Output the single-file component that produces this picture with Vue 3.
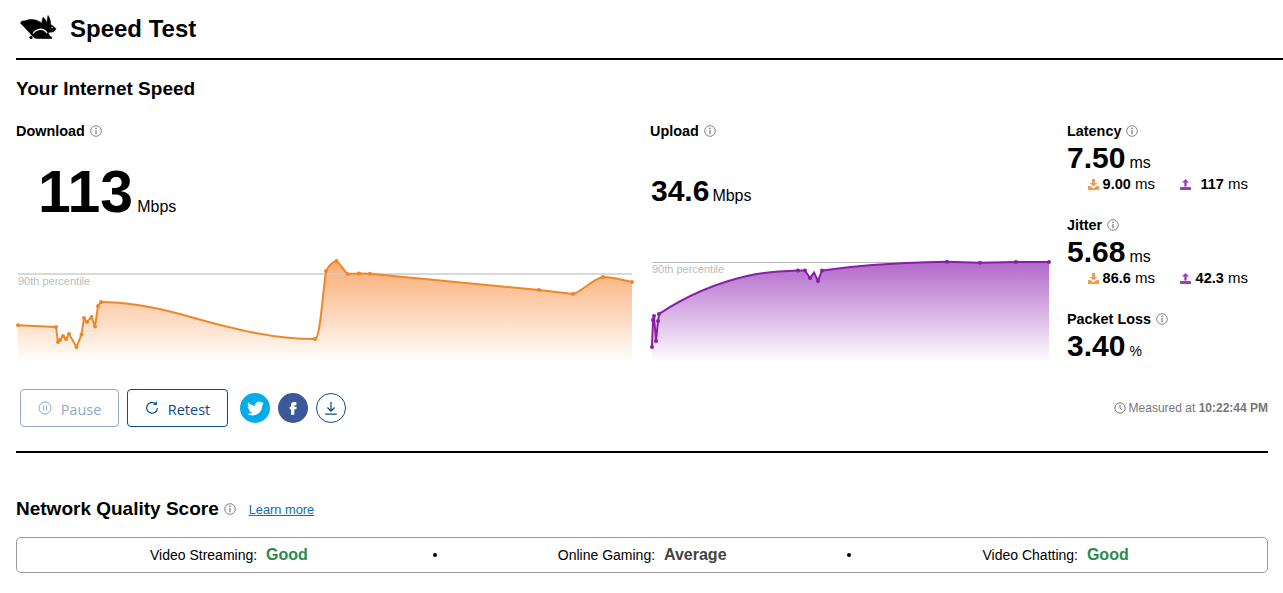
<script setup>
const dlLine = 'M18 325.3 L56 327 L58 342 L60 340 L63 336 L66 339 L69 334 L76.5 347 L81.5 334.5 L84 318 L87 322 L91.5 317 L95 326.5 L98 306 L101 302 C125 302 150 306 180 314 C225 327 270 339 315 339 C320 339 322 300 326 271 C328 267 332 262 336.5 261 C340 263 344 271 347.5 274 L359 273.5 L370 273.7 L539 290 L573 294 C582 292 592 279 603 277 C612 277 622 280 632 282'
const dlFill = dlLine + ' L632 360 L18 360 Z'
const dlDots = [[18, 325.3], [56, 327], [58, 342], [60, 340], [63, 336], [66, 339], [69, 334], [76.5, 347], [81.5, 334.5], [84, 318], [87, 322], [91.5, 317], [95, 326.5], [98, 306], [101, 302], [315, 339], [326, 271], [336.5, 261], [347.5, 274], [359, 273.5], [370, 273.7], [539, 290], [573, 294], [603, 277], [632, 282]]

const ulLine = 'M652 347 L653 320 L654 316 L656 341 L658 321 L659 314 C680 300 712 284 747 276 C765 272 782 271 798 270.5 L805 270.5 L810 278 L814 272.5 L818 281 L822 270.5 C850 267 880 263 947 261.7 L980 262.7 L1016 262 L1049 262'
const ulFill = ulLine + ' L1049 360 L652 360 Z'
const ulDots = [[652, 347], [653, 320], [654, 316], [656, 341], [658, 321], [659, 314], [798, 270.5], [805, 270.5], [810, 278], [818, 281], [822, 270.5], [947, 261.7], [980, 262.7], [1016, 262], [1049, 262]]

const scores = [
  { label: 'Video Streaming:', value: 'Good', cls: 'good' },
  { label: 'Online Gaming:', value: 'Average', cls: 'avg' },
  { label: 'Video Chatting:', value: 'Good', cls: 'good' }
]
</script>

<template>
  <div class="page">
    <svg class="defs" width="0" height="0">
      <symbol id="info" viewBox="0 0 12 12">
        <circle cx="6" cy="6" r="5.3" fill="none" stroke="#777" stroke-width="0.9" />
        <circle cx="6" cy="3.4" r="0.8" fill="#777" />
        <path d="M6 5v4.2" stroke="#777" stroke-width="1.2" />
      </symbol>
      <symbol id="dl" viewBox="0 0 11 11">
        <path d="M4 0h3v4h2.4L5.5 7.6 1.6 4H4z" />
        <path d="M0 7h2.2l3.3 2.4L8.8 7H11v4H0z" />
      </symbol>
      <symbol id="ul" viewBox="0 0 11 11">
        <path d="M5.5 0l3.6 3.6H6.7v4H4.3v-4H1.9z" />
        <path d="M0.8 8h9.4c.5 0 .8.6.8 1.2V11H0V9.2C0 8.6.3 8 .8 8z" />
      </symbol>
    </svg>

    <header class="top">
      <svg class="rabbit" viewBox="0 0 40 26" width="40" height="26">
        <path d="M2.5 6.5C4 5.500 5.500 6.300 7 5.500 11 3.800 17 4 22.700 8L24 2.300C26 3.500 27.200 6 27.700 8.500L29 .5C30.500 2.500 31.700 6 31.700 9.700 33.500 10.500 35.500 12 37 13.700 36 16 34.500 17 32.700 17L29 17.500C30 20 31 21 33 22.500L32.500 23.500H18C15.500 23.500 14 21.500 12.500 20 10 17 6 13 3.500 10 1.500 9 1 7.500 2.500 6.500z" fill="#000" stroke="#000" stroke-width="0.6" stroke-linejoin="round" />
        <path d="M14 18.500C17 14 24 12 28 18" fill="none" stroke="#fff" stroke-width="1.300" />
        <circle cx="12" cy="22.500" r="1.600" fill="#000" />
        <circle cx="33" cy="12.500" r="0.700" fill="#fff" />
      </svg>
      <h1>Speed Test</h1>
    </header>

    <main class="content">
      <h2>Your Internet Speed</h2>

      <div class="metrics">
        <section class="col-dl">
          <div class="label">Download <svg class="i"><use href="#info" /></svg></div>
          <div class="big"><b>113</b><span>Mbps</span></div>
          <svg class="chart chart-dl" viewBox="16 250 618 112" width="618" height="112">
            <defs>
              <linearGradient id="gd" gradientUnits="userSpaceOnUse" x1="0" y1="262" x2="0" y2="360">
                <stop offset="0" stop-color="#fbab72" />
                <stop offset="1" stop-color="#fffdfb" />
              </linearGradient>
            </defs>
            <path :d="dlFill" fill="url(#gd)" />
            <path d="M18 274H632" stroke="#ccc" stroke-opacity="0.75" stroke-width="2" />
            <text x="18" y="285">90th percentile</text>
            <path :d="dlLine" fill="none" stroke="#ee8729" stroke-width="2" />
            <circle v-for="(p, n) in dlDots" :key="n" :cx="p[0]" :cy="p[1]" r="2" fill="#ee8729" />
          </svg>
        </section>

        <section class="col-ul">
          <div class="label">Upload <svg class="i"><use href="#info" /></svg></div>
          <div class="mid"><b>34.6</b><span>Mbps</span></div>
          <svg class="chart" viewBox="650 250 404 112" width="404" height="112">
            <defs>
              <linearGradient id="gu" gradientUnits="userSpaceOnUse" x1="0" y1="262" x2="0" y2="360">
                <stop offset="0" stop-color="#b268ca" />
                <stop offset="1" stop-color="#fdfbfe" />
              </linearGradient>
            </defs>
            <path :d="ulFill" fill="url(#gu)" />
            <path d="M652 262.5H1049" stroke="#bbb" stroke-width="1" />
            <text x="652" y="273">90th percentile</text>
            <path :d="ulLine" fill="none" stroke="#8a1fa6" stroke-width="2" />
            <circle v-for="(p, n) in ulDots" :key="n" :cx="p[0]" :cy="p[1]" r="2" fill="#8a1fa6" />
          </svg>
        </section>

        <section class="col-stats">
          <div class="label">Latency <svg class="i"><use href="#info" /></svg></div>
          <div class="stat"><b>7.50</b><span>ms</span></div>
          <div class="sub">
            <div class="pair"><svg class="tiny orange"><use href="#dl" /></svg><span><b>9.00</b> ms</span></div>
            <div class="pair"><svg class="tiny purple"><use href="#ul" /></svg><span><b>117</b> ms</span></div>
          </div>

          <div class="label gap">Jitter <svg class="i"><use href="#info" /></svg></div>
          <div class="stat"><b>5.68</b><span>ms</span></div>
          <div class="sub">
            <div class="pair"><svg class="tiny orange"><use href="#dl" /></svg><span><b>86.6</b> ms</span></div>
            <div class="pair"><svg class="tiny purple"><use href="#ul" /></svg><span><b>42.3</b> ms</span></div>
          </div>

          <div class="label gap">Packet Loss <svg class="i"><use href="#info" /></svg></div>
          <div class="stat"><b>3.40</b><span class="pct">%</span></div>
        </section>
      </div>

      <div class="actions">
        <button class="btn paused">
          <svg width="14" height="14" viewBox="0 0 14 14" fill="none" stroke="currentColor">
            <circle cx="7" cy="7" r="6" />
            <path d="M5.5 4.5v5M8.5 4.5v5" />
          </svg>
          <span>Pause</span>
        </button>
        <button class="btn">
          <svg width="14" height="14" viewBox="0 0 14 14" fill="none" stroke="currentColor" stroke-width="1.2">
            <path d="M10.8 2.9A5.4 5.4 0 1 0 12.4 7" />
            <path d="M11.2 0.6v2.8H8.4" />
          </svg>
          <span>Retest</span>
        </button>
        <a class="round tw">
          <svg width="17" height="17" viewBox="0 0 24 24" fill="#fff"><path d="M23.953 4.57a10 10 0 01-2.825.775 4.958 4.958 0 002.163-2.723c-.951.555-2.005.959-3.127 1.184a4.92 4.92 0 00-8.384 4.482C7.69 8.095 4.067 6.13 1.64 3.162a4.822 4.822 0 00-.666 2.475c0 1.71.87 3.213 2.188 4.096a4.904 4.904 0 01-2.228-.616v.06a4.923 4.923 0 003.946 4.827 4.996 4.996 0 01-2.212.085 4.936 4.936 0 004.604 3.417 9.867 9.867 0 01-6.102 2.105c-.39 0-.779-.023-1.17-.067a13.995 13.995 0 007.557 2.209c9.053 0 13.998-7.496 13.998-13.985 0-.21 0-.42-.015-.63A9.935 9.935 0 0024 4.59z" /></svg>
        </a>
        <a class="round fb">
          <svg width="16" height="16" viewBox="0 0 24 24" fill="#fff"><path d="M14 8h3V3h-3.4C10.8 3 9 4.9 9 7.6V10H7v4h2v8h5v-8h3l.6-4H14V8.600C14 8.200 14.200 8 14.600 8z" /></svg>
        </a>
        <a class="round save">
          <svg width="18" height="18" viewBox="0 0 16 16" fill="none" stroke="currentColor" stroke-width="1.1">
            <path d="M8 2.5v8M4.8 7.5L8 10.7l3.2-3.2M2.8 13.5h10.4" />
          </svg>
        </a>
        <div class="measured">
          <svg width="12" height="12" viewBox="0 0 12 12" fill="none" stroke="#777">
            <circle cx="6" cy="6" r="5.2" />
            <path d="M6 2.8V6l2.2 2" />
          </svg>
          <span>Measured at <b>10:22:44 PM</b></span>
        </div>
      </div>

      <hr />

      <div class="score-head">
        <h2>Network Quality Score</h2>
        <svg class="i"><use href="#info" /></svg>
        <a class="learn" href="#">Learn more</a>
      </div>

      <div class="scores">
        <template v-for="(s, n) in scores" :key="s.label">
          <span v-if="n" class="dot"></span>
          <div class="score">{{ s.label }} <b :class="s.cls">{{ s.value }}</b></div>
        </template>
      </div>
    </main>
  </div>
</template>

<style scoped>
.page {
  font-family: "Liberation Sans", Arial, sans-serif;
  color: #000;
  background: #fff;
}

.defs {
  position: absolute;
}

.top {
  display: flex;
  align-items: center;
  height: 58px;
  margin-left: 16px;
  padding-left: 3px;
  border-bottom: 2px solid #000;
}

.rabbit {
  margin-right: 11px;
  margin-top: -2px;
}

h1 {
  margin: 0;
  font-size: 24px;
  font-weight: 700;
}

h2 {
  margin: 0;
  font-size: 19px;
  font-weight: 700;
  line-height: 22px;
}

.content {
  padding: 18px 15px 0 16px;
}

.metrics {
  display: flex;
  margin-top: 22px;
}

.label {
  display: flex;
  align-items: center;
  gap: 5px;
  height: 18px;
  font-size: 14.4px;
  font-weight: 700;
}

.i {
  width: 12px;
  height: 12px;
}

.col-dl {
  flex: 0 0 634px;
}

.col-ul {
  flex: 0 0 417px;
}

.col-stats {
  flex: 1;
}

.big {
  display: flex;
  align-items: baseline;
  box-sizing: border-box;
  height: 110px;
  padding-left: 22px;
  padding-top: 15px;
}

.big b {
  font-size: 59px;
  line-height: 74px;
}

.big span {
  margin-left: 4px;
  font-size: 16px;
}

.mid {
  display: flex;
  align-items: baseline;
  box-sizing: border-box;
  height: 110px;
  padding-left: 1px;
  padding-top: 34px;
}

.mid b {
  font-size: 30px;
  line-height: 34px;
}

.mid span {
  margin-left: 3px;
  font-size: 16px;
}

.chart {
  display: block;
}

.chart text {
  font-size: 11px;
  fill: #bbb;
}

.stat {
  display: flex;
  align-items: baseline;
  height: 36px;
}

.stat b {
  font-size: 30px;
  line-height: 36px;
}

.stat span {
  margin-left: 4px;
  font-size: 16px;
}

.stat .pct {
  font-size: 14px;
}

.sub {
  display: flex;
  gap: 25px;
  padding-left: 21px;
  font-size: 15px;
  line-height: 16px;
}

.sub b {
  font-size: 14.5px;
}

.pair {
  display: flex;
  align-items: center;
  justify-content: space-between;
  width: 67px;
  white-space: nowrap;
}

.pair + .pair {
  width: 68px;
}

.tiny {
  width: 11px;
  height: 11px;
  flex: none;
}

.orange {
  fill: #f39a4c;
}

.purple {
  fill: #9a3fb5;
}

.gap {
  margin-top: 24px;
}

.actions {
  display: flex;
  align-items: center;
  margin-top: 25px;
  padding-left: 4px;
}

.btn {
  display: flex;
  align-items: center;
  justify-content: center;
  gap: 9px;
  width: 101px;
  height: 38px;
  margin-right: 8px;
  padding: 0;
  background: #fff;
  border: 1px solid #0d4a86;
  border-radius: 4px;
  color: #0d4a86;
  font-family: "Open Sans", sans-serif;
  font-size: 14.5px;
}

.btn span {
  padding-top: 2px;
}

.paused {
  width: 99px;
  border-color: #8fa9c6;
  color: #8fa9c6;
}

.round {
  display: flex;
  align-items: center;
  justify-content: center;
  box-sizing: border-box;
  width: 30px;
  height: 30px;
  margin-right: 8px;
  border-radius: 50%;
}

.tw {
  margin-left: 4px;
  background: #00aced;
}

.fb {
  background: #3b5998;
}

.save {
  border: 1px solid #0d4a86;
  color: #0d4a86;
}

.measured {
  display: flex;
  align-items: center;
  gap: 3px;
  margin-left: auto;
  color: #777;
  font-size: 12px;
}

hr {
  height: 2px;
  margin: 24px 0 0;
  border: 0;
  background: #000;
}

.score-head {
  display: flex;
  align-items: center;
  margin-top: 45px;
}

.score-head .i {
  margin-left: 5px;
}

.learn {
  margin-left: 13px;
  color: #0b6fb8;
  font-size: 12.8px;
}

.scores {
  display: flex;
  align-items: center;
  height: 34px;
  margin-top: 17px;
  padding-left: 133px;
  border: 1px solid #999;
  border-radius: 5px;
  font-size: 14px;
}

.score b {
  margin-left: 5px;
  font-size: 16px;
}

.good {
  color: #2a8a4c;
}

.avg {
  color: #444;
}

.dot {
  flex: none;
  width: 4px;
  height: 4px;
  margin: 0 121px 0 120px;
  border-radius: 50%;
  background: #000;
}

.dot:first-of-type {
  margin-left: 125px;
}

.dot:last-of-type {
  margin-right: 132px;
}
</style>
